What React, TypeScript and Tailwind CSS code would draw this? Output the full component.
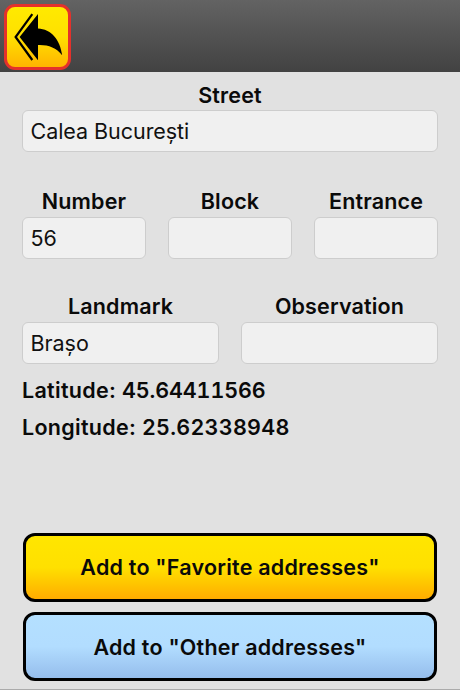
import React, { useState } from "react";

interface FieldProps {
  label: string;
  value: string;
  onChange: (value: string) => void;
  labelClassName?: string;
}

const Field: React.FC<FieldProps> = ({
  label,
  value,
  onChange,
  labelClassName = "",
}) => (
  <label className="flex flex-col flex-1 min-w-0">
    <span
      className={`h-8 text-center text-[21.5px] leading-[33px] font-semibold tracking-[0.15px] ${labelClassName}`}
    >
      {label}
    </span>
    <input
      type="text"
      className="h-[42px] w-full rounded-md border border-[#cdcdcd] bg-[#f0f0f0] pl-[7.5px] pr-2 text-[21.5px] text-[#111111] tracking-[-0.05px] outline-none"
      value={value}
      onChange={(e) => onChange(e.target.value)}
    />
  </label>
);

const BackIcon: React.FC = () => (
  <svg className="w-[60px] h-[60px]" viewBox="0 0 60 60" fill="none">
    <path d="M24.3 7.2 L7.6 30 L24.3 53" stroke="black" strokeWidth="2.2" />
    <path
      d="M30 7 V21.4 C43.1 22 52.1 32.5 54.2 48.2 C48.1 40.5 40.1 37.6 30 38 V53.3 L11.6 30 Z"
      fill="black"
    />
  </svg>
);

const App: React.FC = () => {
  const [address, setAddress] = useState({
    street: "Calea București",
    number: "56",
    block: "",
    entrance: "",
    landmark: "Brașo",
    observation: "",
  });

  const update = (key: keyof typeof address) => (value: string) =>
    setAddress({ ...address, [key]: value });

  return (
    <div className="flex flex-col w-full h-[690px] overflow-hidden bg-[#e1e1e1] border-b border-[#ababab] text-[#0a0a0a] font-[Inter,'Liberation_Sans',sans-serif]">
      <header className="h-[72px] shrink-0 pl-[4px] pt-[4px] bg-linear-to-b from-[#636363] to-[#424242]">
        <button
          aria-label="Back"
          className="flex items-center justify-center w-[67px] h-[66px] rounded-[11px] border-3 border-[#e4312b] bg-linear-to-b from-[#ffea00] via-[#ffe000] to-[#ffb400]"
        >
          <BackIcon />
        </button>
      </header>

      <main className="flex flex-col flex-1 px-[22px] pt-[6px] pb-[8px]">
        <div className="flex">
          <Field
            label="Street"
            value={address.street}
            onChange={update("street")}
            labelClassName="pt-px"
          />
        </div>
        <div className="flex gap-[22px] mt-[33px]">
          <Field label="Number" value={address.number} onChange={update("number")} />
          <Field label="Block" value={address.block} onChange={update("block")} />
          <Field label="Entrance" value={address.entrance} onChange={update("entrance")} />
        </div>
        <div className="flex gap-[22px] mt-[31px]">
          <Field label="Landmark" value={address.landmark} onChange={update("landmark")} />
          <Field label="Observation" value={address.observation} onChange={update("observation")} />
        </div>

        <div className="mt-[8px] text-[21.5px] leading-[37px] font-semibold tracking-[0.3px]">
          <p>
            Latitude: <span className="tabular-nums tracking-[-0.1px]">45.64411566</span>
          </p>
          <p>
            Longitude: <span className="tabular-nums tracking-[0.25px]">25.62338948</span>
          </p>
        </div>

        {/* Save buttons */}
        <div className="flex flex-col gap-[10px] mt-auto px-px">
          <button className="h-[69px] rounded-xl border-[3px] border-black bg-linear-to-b from-[#ffe600] via-[#ffe000] to-[#ffac00] text-[21.5px] font-semibold tracking-[0.22px]">
            Add to "Favorite addresses"
          </button>
          <button className="h-[69px] rounded-xl border-[3px] border-black bg-linear-to-b from-[#b4e0ff] via-[#b2ddff] to-[#95bdec] pt-px text-[21.5px] font-semibold tracking-[0.22px]">
            Add to "Other addresses"
          </button>
        </div>
      </main>
    </div>
  );
};

export default App;
